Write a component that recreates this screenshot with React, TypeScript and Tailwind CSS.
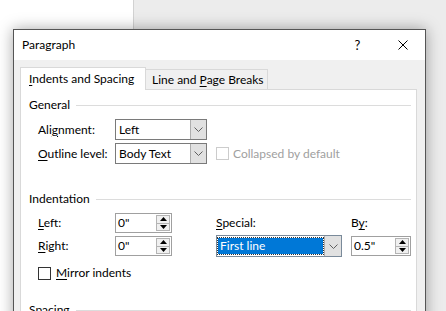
import React from "react";

function U({ children }: { children: React.ReactNode }) {
  return <span className="underline underline-offset-[2px]">{children}</span>;
}

function Chevron() {
  return (
    <svg width="9" height="5" viewBox="0 0 9 5" fill="none">
      <path d="M0.5 0.5 L4.5 4.5 L8.5 0.5" stroke="#606060" strokeWidth="1" />
    </svg>
  );
}

function Tri({ up }: { up?: boolean }) {
  return (
    <svg width="7" height="4" viewBox="0 0 7 4">
      <path d={up ? "M3.5 0 L7 4 L0 4 Z" : "M0 0 L7 0 L3.5 4 Z"} fill="#000" />
    </svg>
  );
}

function Select({ value, className }: { value: string; className: string }) {
  return (
    <div className={`flex border border-[#7a7a7a] bg-white ${className}`}>
      <div className="flex flex-1 items-center pl-[3px]">{value}</div>
      <div className="flex w-[16px] items-center justify-center border-l border-[#adadad] bg-[#e1e1e1]">
        <Chevron />
      </div>
    </div>
  );
}

function Spin({ value, className }: { value: string; className: string }) {
  return (
    <div className={`flex h-[20px] border border-[#a0a0a0] bg-white ${className}`}>
      <div className="flex flex-1 items-center pl-[2px]">{value}</div>
      <div className="m-[1px] flex w-[14px] flex-col border border-[#b4b4b4] bg-[#f0f0f0]">
        <div className="flex flex-1 items-center justify-center border-b border-[#b4b4b4]">
          <Tri up />
        </div>
        <div className="flex flex-1 items-center justify-center">
          <Tri />
        </div>
      </div>
    </div>
  );
}

function Group({ title }: { title: string }) {
  return (
    <div className="flex h-[16px] items-center gap-[6px] pl-[8px] pr-[5px]">
      <span>{title}</span>
      <div className="h-px flex-1 bg-[#dcdcdc]" />
    </div>
  );
}

export default function App() {
  return (
    <div className="relative h-[311px] w-[446px] overflow-hidden bg-[#ececec] font-['Segoe_UI','Lato','Noto_Sans',sans-serif] text-[12px] leading-[16px] text-black">
      <div className="flex h-full">
        <div className="h-full w-[134px] border-r border-[#d2d2d2] bg-white" />
        <div className="h-full flex-1 bg-[#ececec]" />
      </div>

      {/* dialog window */}
      <div className="absolute left-[13px] top-[29px] h-[300px] w-[413px] border border-[#555] bg-[#f0f0f0] shadow-[0_0_14px_rgba(0,0,0,0.35)]">
        <div className="flex h-[30px] items-center bg-white pl-[8px]">
          <span>Paragraph</span>
          <div className="ml-auto flex h-full w-[45px] items-center justify-center text-[13px]">?</div>
          <div className="flex h-full w-[45px] items-center justify-center">
            <svg width="10" height="10" viewBox="0 0 10 10" fill="none">
              <path d="M0.5 0.5 L9.5 9.5 M9.5 0.5 L0.5 9.5" stroke="#000" strokeWidth="1" />
            </svg>
          </div>
        </div>

        <div className="pl-[6px] pr-[8px] pt-[7px]">
          <div className="flex h-[22px] items-end">
            <div className="relative z-10 -mb-px flex h-[23px] w-[126px] items-center border-x border-t border-[#d9d9d9] bg-white pb-[1px] pl-[8px]">
              <span>
                <U>I</U>ndents and Spacing
              </span>
            </div>
            <div className="flex h-[20px] w-[122px] items-center border-r border-t border-[#d9d9d9] bg-[#f0f0f0] pl-[6px]">
              <span>
                Line and <U>P</U>age Breaks
              </span>
            </div>
          </div>

          <div className="h-[240px] border border-[#d9d9d9] bg-white pt-[7px]">
            <Group title="General" />

            <div className="mt-[6px] flex h-[21px] items-center pl-[17px]">
              <span className="w-[77px]">
                Ali<U>g</U>nment:
              </span>
              <Select value="Left" className="h-[21px] w-[92px]" />
            </div>

            <div className="mt-[3px] flex h-[21px] items-center pl-[17px]">
              <span className="w-[77px]">
                <U>O</U>utline level:
              </span>
              <Select value="Body Text" className="h-[21px] w-[92px]" />
              <div className="ml-[9px] h-[13px] w-[13px] border border-[#cccccc] bg-white" />
              <span className="ml-[4px] text-[#a0a0a0]">Collapsed by default</span>
            </div>

            <div className="mt-[27px]">
              <Group title="Indentation" />
            </div>

            <div className="mt-[6px] flex h-[20px] items-center pl-[17px]">
              <span className="w-[77px]">
                <U>L</U>eft:
              </span>
              <Spin value={'0"'} className="w-[57px]" />
              <span className="ml-[44px] w-[135px]">
                <U>S</U>pecial:
              </span>
              <span>
                B<U>y</U>:
              </span>
            </div>

            <div className="mt-[3px] flex h-[20px] items-center pl-[17px]">
              <span className="w-[77px]">
                <U>R</U>ight:
              </span>
              <Spin value={'0"'} className="w-[57px]" />
              <div className="ml-[44px] flex h-[22px] w-[126px] border border-[#7a8a9a] bg-white">
                <div className="flex flex-1 px-[1px] py-[2px]">
                  <div className="flex flex-1 items-center bg-[#0078d7] pl-[2px] text-white outline-1 outline-dotted outline-[#333]">
                    First line
                  </div>
                </div>
                <div className="flex w-[17px] items-center justify-center border-l border-[#adadad] bg-[#e1e1e1]">
                  <Chevron />
                </div>
              </div>
              <Spin value={'0.5"'} className="ml-[9px] w-[60px]" />
            </div>

            <div className="mt-[9px] flex h-[16px] items-center pl-[17px]">
              <div className="h-[13px] w-[13px] border border-[#333] bg-white" />
              <span className="ml-[5px]">
                <U>M</U>irror indents
              </span>
            </div>

            <div className="mt-[21px]">
              <Group title="Spacing" />
            </div>
          </div>
        </div>
      </div>
    </div>
  );
}
